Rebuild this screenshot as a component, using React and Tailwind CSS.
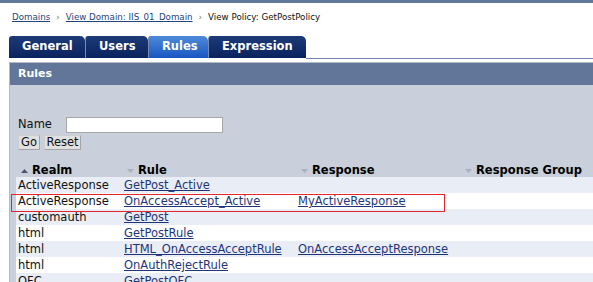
import React from "react";

const rows = [
  { realm: "ActiveResponse", rule: "GetPost_Active", response: "" },
  { realm: "ActiveResponse", rule: "OnAccessAccept_Active", response: "MyActiveResponse" },
  { realm: "customauth", rule: "GetPost", response: "" },
  { realm: "html", rule: "GetPostRule", response: "" },
  { realm: "html", rule: "HTML_OnAccessAcceptRule", response: "OnAccessAcceptResponse" },
  { realm: "html", rule: "OnAuthRejectRule", response: "" },
  { realm: "OFC", rule: "GetPostOFC", response: "" },
];

const tabs = [
  { label: "General", w: "w-[76px]" },
  { label: "Users", w: "w-[63px]" },
  { label: "Rules", w: "w-[60px]", active: true },
  { label: "Expression", w: "w-[98px]" },
];

const SortArrow = ({ up }) => (
  <svg width="7" height="4" viewBox="0 0 7 4" className="shrink-0">
    {up ? (
      <polygon points="0,4 7,4 3.5,0" fill="#4b5770" />
    ) : (
      <polygon points="0,0 7,0 3.5,4" fill="#a9b1be" />
    )}
  </svg>
);

const HeaderCell = ({ label, up }) => (
  <div className="flex items-center pl-[5px] gap-[4px] font-bold text-black">
    <SortArrow up={up} />
    <span>{label}</span>
  </div>
);

const App = () => {
  return (
    <div className="w-[593px] h-[282px] overflow-hidden bg-white font-['DejaVu_Sans',sans-serif]">
      <div className="h-[3px] bg-[#62789a]" />

      {/* Breadcrumb */}
      <div className="h-[30px] flex items-center pl-[12px] text-[8.7px] text-[#111]">
        <a className="underline text-[#24467a]">Domains</a>
        <span className="mx-[6px] text-[#777]">›</span>
        <a className="underline text-[#24467a]">View Domain: IIS_01_Domain</a>
        <span className="mx-[6px] text-[#777]">›</span>
        <span>View Policy: GetPostPolicy</span>
      </div>

      {/* Tabs */}
      <div className="mt-[3px] flex h-[23px] pl-[9px]">
        {tabs.map(t => (
          <div
            key={t.label}
            className={`${t.w} h-[22px] pl-[13px] flex items-center rounded-tl-[3px] rounded-tr-[5px] border-l border-[#7a8bb0] first:border-l-0 text-[11.5px] font-bold text-white ${
              t.active
                ? "bg-linear-to-b from-[#4f8ad8] to-[#1656c2]"
                : "bg-linear-to-b from-[#1d3b78] to-[#0a235f]"
            }`}
          >
            {t.label}
          </div>
        ))}
        <div className="flex-1 h-[23px] border-b border-[#7383b5]" />
      </div>

      {/* Panel */}
      <div className="mt-[3px] ml-[9px] border-l border-t border-[#b3bac6] bg-[#c9d0db]">
        <div className="h-[22px] bg-[#62769a] flex items-center pl-[8px] text-[11px] font-bold text-white">
          Rules
        </div>

        <div className="pt-[32px] pl-[8px] text-[11.5px] text-[#111]">
          <div className="flex items-center h-[16px]">
            <span>Name</span>
            <input className="ml-[14px] w-[157px] h-[16px] bg-white border border-[#a8a8a8] outline-none" />
          </div>
          <div className="flex gap-[4px] mt-[2px]">
            <button className="h-[15px] w-[22px] flex items-center justify-center bg-[#e0e0e0] border border-[#cfcfcf] border-r-[#a5a5a5] border-b-[#a5a5a5] leading-none">
              Go
            </button>
            <button className="h-[15px] w-[37px] flex items-center justify-center bg-[#e0e0e0] border border-[#cfcfcf] border-r-[#a5a5a5] border-b-[#a5a5a5] leading-none">
              Reset
            </button>
          </div>
        </div>

        {/* Table */}
        <div className="relative mt-[12px] ml-[6px] text-[11.5px]">
          <div className="grid grid-cols-[106px_174px_164px_1fr] h-[15px] items-center">
            <HeaderCell label="Realm" up />
            <HeaderCell label="Rule" />
            <HeaderCell label="Response" />
            <HeaderCell label="Response Group" />
          </div>
          {rows.map((r, i) => (
            <div
              key={i}
              className={`grid grid-cols-[106px_174px_164px_1fr] h-[16px] items-center ${
                i % 2 === 0 ? "bg-[#e9edf5]" : "bg-white"
              }`}
            >
              <div className="pl-[2px] text-[#111]">{r.realm}</div>
              <div className="pl-[2px]">
                <a className="underline text-[#1f357a]">{r.rule}</a>
              </div>
              <div className="pl-[2px]">
                {r.response && <a className="underline text-[#1f357a]">{r.response}</a>}
              </div>
              <div />
            </div>
          ))}
          <div className="absolute left-[-5px] top-[32px] w-[434px] h-[18px] border border-[#e3262b] pointer-events-none" />
        </div>
      </div>
    </div>
  );
};

export default App;
